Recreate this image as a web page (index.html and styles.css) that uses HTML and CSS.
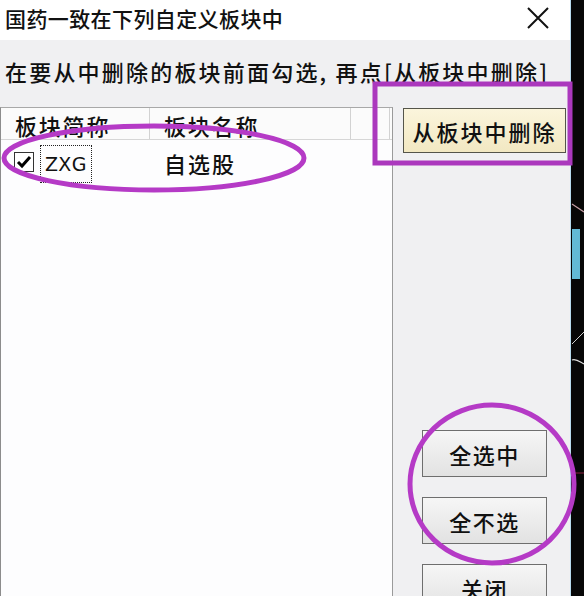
FILE: index.html
```html
<!DOCTYPE html>
<html lang="zh-CN">
<head>
<meta charset="utf-8">
<title>自定义板块</title>
<link rel="stylesheet" href="styles.css">
</head>
<body>
<div class="screen">
  <div class="window">
    <div class="titlebar">
      <span class="title">国药一致在下列自定义板块中</span>
      <svg class="close" width="22" height="22" viewBox="0 0 22 22"><path d="M1 1 L21 21 M21 1 L1 21" stroke="#111" stroke-width="2" fill="none"/></svg>
    </div>
    <div class="hint">在要从中删除的板块前面勾选, 再点[从板块中删除]</div>
    <div class="content">
      <div class="list">
        <div class="list-head">
          <div class="col c1">板块简称</div>
          <div class="col c2">板块名称</div>
          <div class="col c3"></div>
        </div>
        <div class="row">
          <div class="cell first">
            <span class="check"><svg width="18" height="18" viewBox="0 0 18 18"><path d="M3 9 L7 13 L15 4" stroke="#000" stroke-width="3" fill="none"/></svg></span>
            <span class="code">ZXG</span>
          </div>
          <div class="cell second">自选股</div>
        </div>
      </div>
      <div class="side">
        <button class="btn btn-del">从板块中删除</button>
        <div class="group">
          <button class="btn">全选中</button>
          <button class="btn">全不选</button>
          <button class="btn">关闭</button>
        </div>
      </div>
    </div>
  </div>
  <div class="desktop">
    <svg class="desk-art" width="13" height="596" viewBox="0 0 13 596">
      <path d="M1 204 L13 212" stroke="#c8a0a8" stroke-width="1.2" fill="none"/>
      <path d="M1 344 C5 340 9 336 13 332" stroke="#cfcfcf" stroke-width="1" fill="none"/>
      <path d="M1 360 C5 358 9 362 13 364" stroke="#e0e0e0" stroke-width="1.2" fill="none"/>
      <path d="M0 473 L13 473" stroke="#8a2040" stroke-width="1" fill="none"/>
    </svg>
    <div class="scroll-thumb"></div>
  </div>
  <svg class="marks" width="584" height="596" viewBox="0 0 584 596">
    <rect x="375" y="84" width="195" height="79" fill="none" stroke="#ab38bd" stroke-width="5"/>
    <ellipse cx="154" cy="158" rx="150" ry="32" fill="none" stroke="#b53ac6" stroke-width="5"/>
    <ellipse cx="492" cy="484" rx="82" ry="79" fill="none" stroke="#b53ac6" stroke-width="5"/>
  </svg>
</div>
</body>
</html>
```

FILE: styles.css
```css
html, body {
  margin: 0;
  padding: 0;
  overflow: hidden;
}

body {
  font-family: "Noto Sans CJK SC", "Noto Sans", sans-serif;
  font-weight: 500;
  color: #111;
}

.screen {
  position: relative;
  display: flex;
  width: 584px;
  height: 596px;
  background: #0a0a0a;
}

.window {
  width: 570px;
  height: 596px;
  flex: none;
  background: #f0f0f2;
  border-right: 1px solid #b9dcef;
  display: flex;
  flex-direction: column;
}

.titlebar {
  height: 40px;
  flex: none;
  box-sizing: border-box;
  background: #ffffff;
  display: flex;
  align-items: center;
  padding-left: 5px;
  padding-right: 21px;
}

.title {
  font-size: 21px;
  line-height: 28px;
  letter-spacing: 0.4px;
  margin-top: -4px;
}

.close {
  margin-left: auto;
  margin-top: -4px;
}

.hint {
  height: 67px;
  flex: none;
  box-sizing: border-box;
  display: flex;
  align-items: center;
  padding-left: 5px;
  padding-bottom: 5px;
  font-size: 22px;
  letter-spacing: 2.2px;
  white-space: nowrap;
}

.content {
  flex: 1;
  display: flex;
  min-height: 0;
}

.list {
  width: 393px;
  flex: none;
  box-sizing: border-box;
  background: #fdfdfe;
  border-left: 1px solid #8c8c8c;
  border-top: 1px solid #a8a8a8;
  border-right: 1px solid #9a9a9a;
}

.list-head {
  display: flex;
  height: 31px;
  border-bottom: 1px solid #d6d6d6;
  background: #fbfbfb;
}

.col {
  box-sizing: border-box;
  border-right: 1px solid #d2d2d2;
  font-size: 22px;
  line-height: 31px;
  letter-spacing: 1.8px;
  padding-left: 14px;
  padding-top: 2px;
  white-space: nowrap;
}

.c1 { width: 149px; }
.c2 { width: 201px; }
.c3 { width: 39px; }

.row {
  display: grid;
  grid-template-columns: 149px 201px;
  height: 44px;
  align-items: center;
}

.cell.first {
  display: flex;
  align-items: center;
  padding-left: 13px;
}

.check {
  width: 18px;
  height: 18px;
  border: 1px solid #333;
  background: #fff;
  display: flex;
  margin-right: 6px;
}

.code {
  box-sizing: border-box;
  width: 52px;
  height: 38px;
  margin-top: 3px;
  border: 1px dotted #222;
  padding-left: 4px;
  font-family: "DejaVu Sans", sans-serif;
  font-weight: 400;
  font-size: 19px;
  line-height: 36px;
  letter-spacing: 0.3px;
}

.cell.second {
  padding-left: 14px;
  font-size: 22px;
  letter-spacing: 2px;
  line-height: 30px;
  margin-top: 2px;
}

.side {
  flex: 1;
  display: flex;
  flex-direction: column;
  padding-left: 10px;
}

.btn {
  flex: none;
  font-family: "Noto Sans CJK SC", "Noto Sans", sans-serif;
  font-weight: 500;
  font-size: 22px;
  letter-spacing: 1.5px;
  color: #111;
  padding: 0;
  box-sizing: border-box;
  border: 1px solid #6e6e6e;
  background: linear-gradient(#f6f6f6, #e2e2e2);
  width: 125px;
  height: 47px;
  line-height: 30px;
}

.btn-del {
  width: 163px;
  height: 45px;
  margin-top: 1px;
  letter-spacing: 2px;
  border-color: #55554a;
  background: linear-gradient(#fbf5dc, #f2e8c2);
}

.group {
  flex: none;
  margin-top: 277px;
  padding-left: 19px;
  display: flex;
  flex-direction: column;
  gap: 20px;
}

.desktop {
  position: relative;
  flex: 1;
  background: #070707;
}

.desk-art {
  position: absolute;
  left: 0;
  top: 0;
}

.scroll-thumb {
  position: absolute;
  left: 1px;
  top: 229px;
  width: 8px;
  height: 50px;
  background: #62b9d6;
}

.marks {
  position: absolute;
  left: 0;
  top: 0;
  pointer-events: none;
}
```
